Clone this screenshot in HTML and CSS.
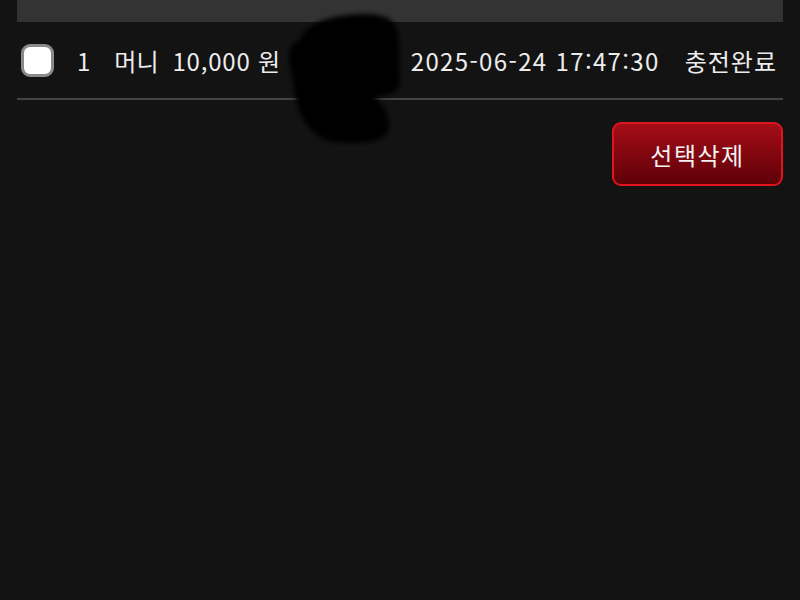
FILE: index.html
```html
<!DOCTYPE html>
<html lang="ko">
<head>
    <meta charset="UTF-8">
    <meta name="viewport" content="width=device-width, initial-scale=1.0">
    <title>충전내역</title>
    <link rel="stylesheet" href="styles.css">
</head>
<body>

<div class="container">
    <!-- 상단 헤더 바 -->
    <div class="top-bar"></div>

    <!-- 내역 목록 -->
    <div class="row">
        <span class="check"></span>
        <span class="num">1</span>
        <span class="type">머니</span>
        <span class="amount">10,000 원</span>
        <span class="date">2025-06-24 17:47:30</span>
        <span class="status">충전완료</span>
    </div>

    <div class="actions">
        <button class="button">선택삭제</button>
    </div>
</div>

<!-- 가림 표시 -->
<svg class="blot" width="800" height="160" viewBox="0 0 800 160">
    <defs>
        <filter id="soft" x="-20%" y="-20%" width="140%" height="140%"><feGaussianBlur stdDeviation="2.5"/></filter>
    </defs>
    <path filter="url(#soft)" fill="#060606" d="M300 40 C305 24 330 15 360 14 C386 13 399 20 399 40 L400 80 C400 92 390 96 374 97 C386 106 392 120 388 132 C384 142 360 145 335 142 C315 140 301 122 296 100 L289 60 C288 48 293 42 300 40 Z"/>
</svg>

</body>
</html>
```

FILE: styles.css
```css
body {
    font-family: "Noto Sans CJK KR", "Noto Sans", sans-serif;
    background-color: #131313;
    color: #ececec;
    margin: 0;
    padding: 0;
}
.container {
    margin: 0 17px;
}
.top-bar {
    height: 22px;
    background-color: #333333;
}
.row {
    display: flex;
    align-items: center;
    height: 76px;
    border-bottom: 2px solid #444444;
    font-size: 24px;
    white-space: nowrap;
}
.check {
    width: 27px;
    height: 27px;
    margin-left: 4px;
    background-color: #fff;
    border: 3px solid #8a8a8a;
    border-radius: 9px;
}
.num {
    margin-left: 23px;
}
.type {
    margin-left: 24px;
}
.amount {
    margin-left: 14px;
    letter-spacing: 0.8px;
}
.date {
    margin-left: auto;
    letter-spacing: 1.35px;
}
.status {
    margin-left: 25px;
    margin-right: 6px;
    letter-spacing: 1px;
}
.actions {
    display: flex;
    justify-content: flex-end;
    padding-top: 22px;
}
.button {
    width: 171px;
    height: 64px;
    background: linear-gradient(#a50d17, #5e0008);
    border: 2px solid #e0141c;
    border-radius: 9px;
    color: #f2f2f2;
    font-family: "Noto Sans CJK KR", sans-serif;
    font-size: 24px;
    letter-spacing: 1.5px;
    padding: 0;
}
.blot {
    position: absolute;
    left: 0;
    top: 0;
}
```
